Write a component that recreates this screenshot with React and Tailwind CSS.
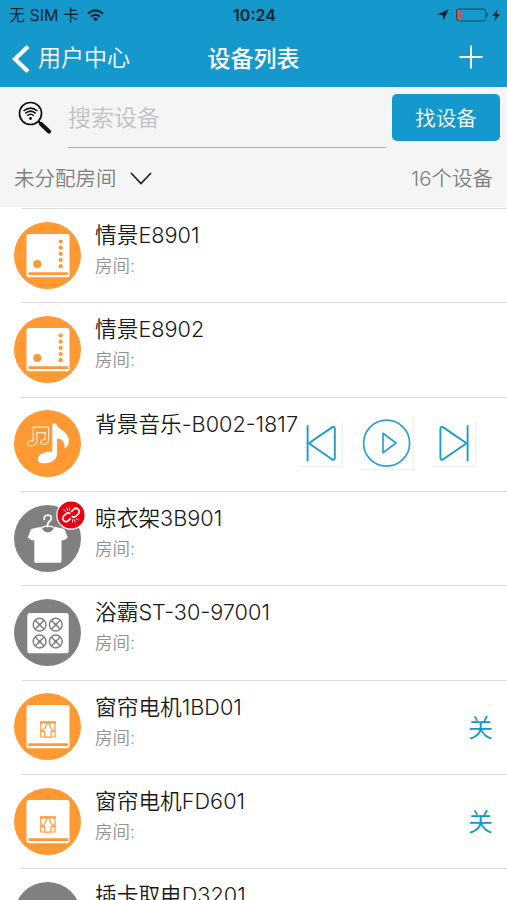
import React, { useState } from "react";

const devices = [
  { name: "情景E8901", icon: "scene", online: true },
  { name: "情景E8902", icon: "scene", online: true },
  { name: "背景音乐-B002-1817", icon: "music", online: true, player: true },
  { name: "晾衣架3B901", icon: "shirt", online: false, unlinked: true },
  { name: "浴霸ST-30-97001", icon: "heater", online: false },
  { name: "窗帘电机1BD01", icon: "curtain", online: true, state: "关" },
  { name: "窗帘电机FD601", icon: "curtain", online: true, state: "关" },
  { name: "插卡取电D3201", icon: "card", online: false },
];

const Panel = () => (
  <>
    <rect x="12.5" y="12" width="43" height="43.3" rx="2.2" fill="#fff" />
    <rect x="14.3" y="50.3" width="39.8" height="2.6" rx="1" fill="#ff9933" />
  </>
);

const SceneIcon = () => (
  <>
    <Panel />
    <g fill="#ff9933">
      <circle cx="23.3" cy="42" r="4.1" />
      {[19.5, 25.7, 31.8, 38, 44.2].map((y) => (
        <circle key={y} cx="46.7" cy={y} r="2.1" />
      ))}
    </g>
  </>
);

const MusicIcon = () => (
  <>
    <path
      d="M19.2 31V17.2H34.6V29.5C34.6 33 31.5 34.5 29.3 34.5C26.5 34.5 26 31.2 28.3 30C29.5 29.2 30.7 29.2 31.3 29V22.6H22.8V31.5C22.5 34.5 19.5 36 16.5 35.8C12.5 35.5 12.3 31.6 15.7 31C17 30.7 18.3 31 19.2 31Z"
      fill="none"
      stroke="#fff"
      strokeOpacity="0.8"
      strokeWidth="1.2"
    />
    <path
      d="M38.3 13.5H42C43.5 19 54.5 22 54.9 30C55 33.5 53.4 37.6 50.2 37.8C50.5 36.5 50.8 35.5 50.4 34C49.5 30.5 47 28.8 43 28.5V43C43 49.5 38.5 53.3 30.5 53.3C25 53.3 23.2 51.3 24 48C25.2 43.5 31.5 41.2 38.3 41.8Z"
      fill="#fff"
    />
  </>
);

const ShirtIcon = () => (
  <>
    <path
      d="M30.3 14.3C29.6 11.3 32.2 9.8 34.4 10.1C38 10.5 38.3 14.4 35.6 16.2C33.8 17.4 33.4 18.6 33.4 21.5"
      fill="none"
      stroke="#fff"
      strokeWidth="1.7"
      strokeLinecap="round"
    />
    <path
      d="M13.8 32.5L16.7 25Q17.2 23.8 19 23.5L27.5 21.8C29.5 29.3 38.2 29.3 40.2 21.8L48.6 23.5Q50.3 23.8 50.8 25L53.8 32.5Q51.3 35.5 47.5 35.5V56.2Q47.5 57.8 46 57.8H21.8Q20.3 57.8 20.3 56.2V35.5Q16.5 35.5 13.8 32.5Z"
      fill="#fff"
    />
    <path d="M28 22.3Q34 20 39.6 22.3" fill="none" stroke="#fff" strokeWidth="1.4" />
  </>
);

const HeaterIcon = () => (
  <>
    <rect x="13.3" y="14.1" width="41.4" height="40.2" rx="2.5" fill="#fff" />
    <g fill="none" stroke="#808080" strokeWidth="1.5">
      {[
        [25.6, 25.7],
        [41.8, 25.7],
        [25.6, 42.5],
        [41.8, 42.5],
      ].map(([x, y]) => (
        <g key={`${x}-${y}`} transform={`translate(${x} ${y})`}>
          <circle r="6.4" />
          <path d="M-4.5 -4.5L4.5 4.5M4.5 -4.5L-4.5 4.5" />
          <circle r="1.5" fill="#808080" stroke="none" />
        </g>
      ))}
    </g>
  </>
);

const CurtainIcon = () => (
  <>
    <Panel />
    <g fill="none" stroke="#ff9933" strokeWidth="1.2">
      <path d="M26 29.3H41.8" strokeWidth="2.2" />
      <path d="M26.8 29V44H30.8V38.5M41 29V44H37V38.5M26.5 38.3H31M41.3 38.3H36.8M30.8 44.2H37" />
      <path d="M32.5 30C32.3 34 30.5 36.5 27.5 37.8M35.3 30C35.5 34 37.3 36.5 40.3 37.8" />
    </g>
  </>
);

const CardIcon = () => (
  <rect x="13" y="35" width="41" height="20" rx="2" fill="#fff" />
);

const icons = {
  scene: SceneIcon,
  music: MusicIcon,
  shirt: ShirtIcon,
  heater: HeaterIcon,
  curtain: CurtainIcon,
  card: CardIcon,
};

const DeviceIcon = ({ device }) => {
  const Icon = icons[device.icon];
  return (
    <div className="relative mt-[13.7px] h-[67px] w-[67px] shrink-0">
      <svg viewBox="0 0 67 67" className="h-[67px] w-[67px]">
        <circle cx="33.5" cy="33.5" r="33.5" fill={device.online ? "#ff9933" : "#808080"} />
        <Icon />
      </svg>
      {device.unlinked && (
        <svg
          viewBox="-15 -15 30 30"
          className="absolute -top-[4.5px] left-[41.7px] h-[30px] w-[30px]"
        >
          <circle r="14.8" fill="#fff" />
          <circle r="13.6" fill="#e60012" />
          <g fill="none" stroke="#fff" strokeWidth="1.7" strokeLinecap="round">
            <path d="M0.5 -3.5L2.6 -5.6A3.2 3.2 0 0 1 7.2 -1L5 1.2Q3.2 2.7 1.2 1.6" />
            <path d="M-0.8 3.8L-2.6 5.6A3.2 3.2 0 0 1 -7.2 1L-5 -1.2Q-3.2 -2.7 -1.2 -1.6" />
            <path
              d="M-3.2 -4.3L-4.2 -7M-5.5 -3.8L-7.3 -5M-1.5 -4.8V-7M3.2 4.3L4.2 7M5.5 3.8L7.3 5M1.5 4.8V7"
              strokeWidth="0.9"
            />
          </g>
        </svg>
      )}
    </div>
  );
};

const Player = () => {
  const buttonStyle = "border-r border-b border-[#eaf2f8]";
  return (
    <div className="mt-[20px] mr-[31px] flex items-start">
      <button className={`${buttonStyle} mt-[4px] h-[45px] w-[44px]`}>
        <svg viewBox="0 0 43 43" fill="none" stroke="#1a9ccc" strokeWidth="1.9" className="h-[43px] w-[43px]">
          <path d="M8.6 3.3V39.3" />
          <path d="M9.8 21.3L33.3 5.1Q35.8 4.1 35.8 6.8V35.8Q35.8 38.5 33.3 37.5Z" strokeLinejoin="round" />
        </svg>
      </button>
      <button className={`${buttonStyle} ml-[18px] h-[52px] w-[53px]`}>
        <svg viewBox="0 0 52 52" fill="none" stroke="#2ba0cf" strokeWidth="1.7" className="h-[52px] w-[52px]">
          <circle cx="25.6" cy="25.2" r="23" />
          <path d="M22 15.3V34.7L35 25Z" strokeLinejoin="round" />
        </svg>
      </button>
      <button className={`${buttonStyle} mt-[4px] ml-[18px] h-[45px] w-[44px]`}>
        <svg viewBox="0 0 43 43" fill="none" stroke="#1a9ccc" strokeWidth="1.9" className="h-[43px] w-[43px]">
          <path d="M35.6 3.3V39.3" />
          <path d="M34.5 21.3L10.9 5.1Q8.4 4.1 8.4 6.8V35.8Q8.4 38.5 10.9 37.5Z" strokeLinejoin="round" />
        </svg>
      </button>
    </div>
  );
};

const DeviceRow = ({ device }) => (
  <li className="flex h-[94.35px] pl-[14px]">
    <DeviceIcon device={device} />
    <div className="-ml-[60px] flex flex-1 border-t border-[#dcdcdc] pl-[74px]">
      <div className="pt-[11px] whitespace-nowrap">
        <h3 className="text-[21.7px] leading-[30px] font-[350] text-[#1a1a1a]">{device.name}</h3>
        {!device.player && (
          <p className="mt-[4px] text-[17.5px] leading-[24px] font-[350] text-[#929292]">房间:</p>
        )}
      </div>
      {device.player && (
        <div className="ml-auto w-0">
          <div className="float-right">
            <Player />
          </div>
        </div>
      )}
      {device.state && (
        <button className="mt-[18px] mr-[14px] ml-auto h-[60px] text-[25px] font-[350] text-[#1598cb]">
          {device.state}
        </button>
      )}
    </div>
  </li>
);

const StatusBar = () => (
  <div className="grid h-[30px] grid-cols-3 items-center text-[15.5px] text-[#082431]">
    <div className="flex items-center gap-[8px] pl-[9px]">
      <span className="text-[16px] whitespace-nowrap">无 SIM 卡</span>
      <svg viewBox="0 0 18 14" className="h-[13px] w-[17px]" fill="none" stroke="currentColor" strokeWidth="2.2">
        <path d="M1 5Q9 -2 17 5M4 8.3Q9 4 14 8.3" />
        <path d="M6 10.2Q9 8 12 10.2L9 13.5Z" fill="currentColor" stroke="none" />
      </svg>
    </div>
    <span className="pl-[2px] text-center text-[16px] font-semibold">10:24</span>
    <div className="flex items-center justify-end gap-[7.5px] pr-[7px]">
      <svg viewBox="0 0 12 12" className="h-[12px] w-[12px]" fill="currentColor">
        <path d="M11.7 0.3L6.4 11.8L5.8 6.3L0.3 5.5Z" />
      </svg>
      <svg viewBox="0 0 44 14" className="h-[14px] w-[44px]">
        <rect x="0.6" y="1" width="29" height="12" rx="2" fill="none" stroke="#164b61" />
        <rect x="1.5" y="2.2" width="3.4" height="9.8" rx="1" fill="#e94b4b" />
        <path d="M30.8 4.8Q33.5 7 30.8 9.2Z" fill="#082431" />
        <path d="M42 1L36.3 8H39.6L38.1 13.5L43.9 6H40.5Z" fill="#082431" />
      </svg>
    </div>
  </div>
);

const NavBar = () => (
  <div className="grid h-[57px] grid-cols-3 items-center text-[23px] text-white">
    <button className="flex items-center gap-[8px] pl-[12px] font-[350] whitespace-nowrap">
      <svg viewBox="0 0 18 28" className="h-[28px] w-[18px]" fill="none" stroke="currentColor" strokeWidth="4.2">
        <path d="M16 1.5L3 14L16 26.5" />
      </svg>
      用户中心
    </button>
    <h1 className="pt-[1px] text-center font-medium">设备列表</h1>
    <button className="-mt-[4px] flex justify-end pr-[24px]">
      <svg viewBox="0 0 24 24" className="h-[24px] w-[24px]" fill="none" stroke="currentColor" strokeWidth="2">
        <path d="M12 0.5V23.5M0.5 12H23.5" />
      </svg>
    </button>
  </div>
);

const SearchIcon = () => (
  <svg viewBox="0 0 34 34" className="h-[34px] w-[34px]" fill="none" stroke="#111">
    <circle cx="12.5" cy="12.5" r="11" strokeWidth="1.7" />
    <path d="M20.5 20.5L23 23" strokeWidth="2" />
    <path d="M23 23L31 30.5" strokeWidth="4.2" strokeLinecap="round" />
    <path d="M5.5 10Q12.5 4.2 19.5 10M7.3 12.4Q12.5 7.8 17.7 12.4M9.2 14.7Q12.5 11.8 15.8 14.7" strokeWidth="1.5" />
    <circle cx="12.5" cy="17.5" r="1.4" fill="#111" stroke="none" />
  </svg>
);

const App = () => {
  const [keyword, setKeyword] = useState("");

  return (
    <div className="h-[900px] w-[507px] overflow-hidden bg-white font-['Inter','Noto_Sans_CJK_SC',sans-serif]">
      <header className="h-[87px] bg-[#1598cb]">
        <StatusBar />
        <NavBar />
      </header>
      <section className="h-[120px] bg-[#f5f5f5]">
        <div className="flex pr-[7px] pl-[18px]">
          <div className="mt-[14px]">
            <SearchIcon />
          </div>
          <input
            type="text"
            value={keyword}
            onChange={(e) => setKeyword(e.target.value)}
            placeholder="搜索设备"
            className="ml-[16px] h-[61px] w-[318px] border-b-[1.5px] border-[#aaa] pt-[2px] text-[23px] font-[350] outline-none placeholder:text-[#c2c2c6]"
          />
          <button className="mt-[7px] ml-[6px] h-[47px] w-[108px] rounded-[5px] bg-[#1598cb] pt-[3px] text-[20.5px] font-[350] text-white">
            找设备
          </button>
        </div>
        <div className="mt-[16px] flex h-[30px] items-center justify-between pr-[14px] pl-[14px] text-[20.5px] font-[350] text-[#808080]">
          <button className="flex items-center gap-[13px]">
            未分配房间
            <svg viewBox="0 0 22 13" className="-mt-[2px] h-[13px] w-[22px]" fill="none" stroke="#222" strokeWidth="1.8">
              <path d="M1 1L11 11.5L21 1" />
            </svg>
          </button>
          <span>16个设备</span>
        </div>
      </section>
      <ul className="pt-[1px]">
        {devices.map((device) => (
          <DeviceRow key={device.name} device={device} />
        ))}
      </ul>
    </div>
  );
};

export default App;
